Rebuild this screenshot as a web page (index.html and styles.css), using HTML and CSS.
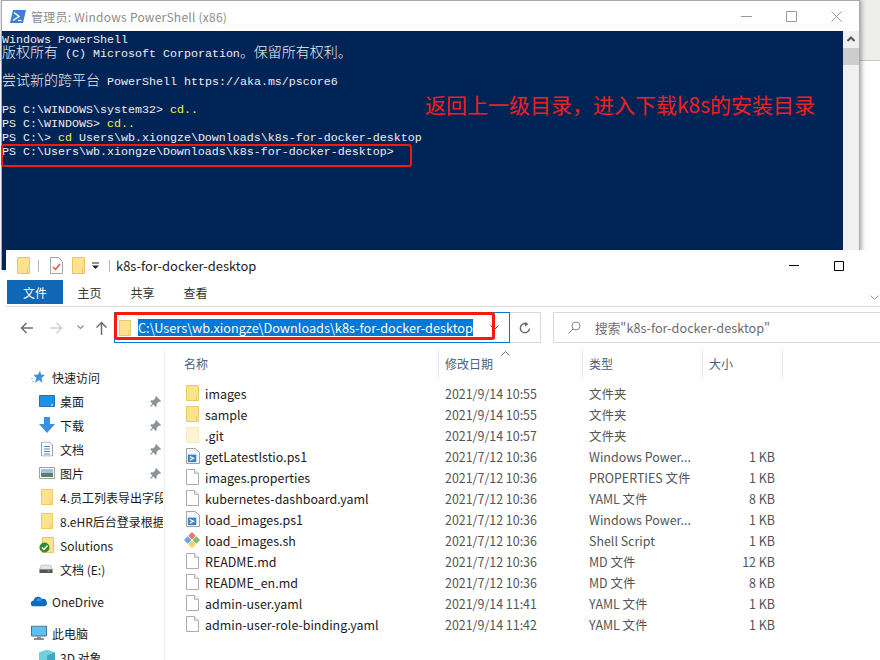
FILE: index.html
```html
<!DOCTYPE html>
<html lang="zh">
<head>
<meta charset="utf-8">
<title>PowerShell and Explorer</title>
<link rel="stylesheet" href="styles.css">
</head>
<body>
<svg class="defs" width="0" height="0">
  <symbol id="folder" viewBox="0 0 13 17" preserveAspectRatio="none"><path d="M.5.500h12v16H.5z" fill="#fde38f" stroke="#eac563"/><path d="M10.500 16.500v-5h2" fill="#fff3c6" stroke="#eac563"/></symbol>
  <symbol id="folderpale" viewBox="0 0 13 17" preserveAspectRatio="none"><path d="M.5.500h12v16H.5z" fill="#fef4d2" stroke="#f6e8b8"/></symbol>
  <symbol id="file" viewBox="0 0 13 17" preserveAspectRatio="none"><path d="M.5.500h8l4 4v12H.5z" fill="#fff" stroke="#a9a9a9"/><path d="M8.500.500v4h4" fill="#f3f3f3" stroke="#a9a9a9"/></symbol>
  <symbol id="psfile" viewBox="0 0 15 17" preserveAspectRatio="none"><path d="M.5.500h9l5 4v12H.5z" fill="#f7f7f7" stroke="#9a9a9a"/><path d="M2 7h9v8H2z" fill="#3b83c8"/><path d="M4 9l4 2-4 2" fill="none" stroke="#fff" stroke-width="1.300"/></symbol>
  <symbol id="shfile" viewBox="0 0 17 17"><path d="M8.500 0l4 4-4 4-4-4z" fill="#e8746c"/><path d="M13 4.500l4 4-4 4-4-4z" fill="#7cc06a"/><path d="M8.500 9l4 4-4 4-4-4z" fill="#f3d35b"/><path d="M4 4.500l4 4-4 4-4-4z" fill="#6aa7e6"/></symbol>
  <symbol id="pin" viewBox="0 0 11 11"><path d="M6 0l5 5-1 1-1-.4-2.400 2.400.2 2-1 1L3.300 8.500.8 11 0 10.200l2.500-2.500L.2 5.200l1-1 2 .2L5.600 2 5.200 1z" fill="#8a9299"/></symbol>
</svg>

<main class="desktop">
  <section class="ps-window">
    <header class="ps-title">
      <svg class="ps-icon" width="16" height="13" viewBox="0 0 16 13"><path d="M3 0h13l-3 13H0z" fill="#3f7fd0"/><path d="M4 2.500l5 4-6 4" fill="none" stroke="#fff" stroke-width="1.500"/><path d="M8 10.500h3.500" stroke="#fff" stroke-width="1.300"/></svg>
      <span class="ps-name">管理员: Windows PowerShell (x86)</span>
      <div class="ps-controls">
        <svg width="11" height="11" viewBox="0 0 11 11"><path d="M0 5.500h11" stroke="#999"/></svg>
        <svg width="11" height="11" viewBox="0 0 11 11"><path d="M.5.500h10v10H.5z" fill="none" stroke="#999"/></svg>
        <svg width="11" height="11" viewBox="0 0 11 11"><path d="M.5.500l10 10M10.500.500l-10 10" stroke="#999"/></svg>
      </div>
    </header>
    <div class="ps-body">
      <div class="console">
        <div class="line">Windows PowerShell</div>
        <div class="line"><span class="wide">版权所有</span> (C) Microsoft Corporation<span class="wide">。保留所有权利。</span></div>
        <div class="line"></div>
        <div class="line"><span class="wide">尝试新的跨平台</span> PowerShell https://aka.ms/pscore6</div>
        <div class="line"></div>
        <div class="line">PS C:\WINDOWS\system32&gt; <span class="cmd">cd..</span></div>
        <div class="line">PS C:\WINDOWS&gt; <span class="cmd">cd..</span></div>
        <div class="line">PS C:\&gt; <span class="cmd">cd</span> Users\wb.xiongze\Downloads\k8s-for-docker-desktop</div>
        <div class="line">PS C:\Users\wb.xiongze\Downloads\k8s-for-docker-desktop&gt;</div>
      </div>
      <div class="scrollbar">
        <svg width="16" height="16" viewBox="0 0 16 16"><path d="M4.500 10L8 6.500 11.500 10" fill="none" stroke="#555" stroke-width="2"/></svg>
        <div class="thumb"></div>
      </div>
    </div>
  </section>

  <p class="note">返回上一级目录，进入下载k8s的安装目录</p>
  <div class="mark mark-ps"></div>

  <section class="ex-window">
    <header class="ex-title">
      <svg class="qa-first" width="13" height="17"><use href="#folder"/></svg>
      <span class="vsep"></span>
      <svg class="qa-doc" width="13" height="17" viewBox="0 0 13 17"><path d="M.5.500h8l4 4v12H.5z" fill="#fff" stroke="#a5a5a5"/><path d="M3 10l2.500 2.500L10 7" fill="none" stroke="#e2553a" stroke-width="1.500"/></svg>
      <svg class="qa-folder" width="13" height="17"><use href="#folder"/></svg>
      <svg class="qa-drop" width="8" height="8" viewBox="0 0 8 8"><path d="M0 1h7" stroke="#222"/><path d="M0 3.500h7L3.500 7z" fill="#222"/></svg>
      <span class="vsep vsep-b"></span>
      <span class="ex-name">k8s-for-docker-desktop</span>
      <div class="ex-controls">
        <svg width="10" height="11" viewBox="0 0 10 11"><path d="M0 5.500h10" stroke="#000"/></svg>
        <svg width="10" height="10" viewBox="0 0 10 10"><path d="M.5.500h9v9H.5z" fill="none" stroke="#000"/></svg>
      </div>
    </header>
    <nav class="tabs">
      <span class="tab tab-file">文件</span>
      <span class="tab">主页</span>
      <span class="tab">共享</span>
      <span class="tab">查看</span>
      <svg class="ribbon-toggle" width="9" height="6" viewBox="0 0 9 6"><path d="M.5.500l4 4 4-4" fill="none" stroke="#999"/></svg>
    </nav>
    <div class="addr-row">
      <div class="nav-btns">
        <svg width="13" height="12" viewBox="0 0 13 12"><path d="M13 6H2M6.500 1L1.500 6l5 5" fill="none" stroke="#6d6d6d" stroke-width="1.500"/></svg>
        <svg class="nav-fwd" width="13" height="12" viewBox="0 0 13 12"><path d="M0 6h11M6.500 1l5 5-5 5" fill="none" stroke="#cfcfcf" stroke-width="1.500"/></svg>
        <svg class="nav-caret" width="7" height="5" viewBox="0 0 7 5"><path d="M.5.500l3 3 3-3" fill="none" stroke="#8b8b8b" stroke-width="1.200"/></svg>
        <svg class="nav-up" width="11" height="14" viewBox="0 0 11 14"><path d="M5.500 14V2M.5 6.500l5-5 5 5" fill="none" stroke="#6d6d6d" stroke-width="1.500"/></svg>
      </div>
      <div class="addr-box">
        <svg class="addr-folder" width="12" height="16"><use href="#folder"/></svg>
        <span class="addr-sel">C:\Users\wb.xiongze\Downloads\k8s-for-docker-desktop</span>
        <svg class="addr-drop" width="9" height="6" viewBox="0 0 9 6"><path d="M.5.500l4 4 4-4" fill="none" stroke="#555"/></svg>
      </div>
      <div class="refresh">
        <svg width="12" height="12" viewBox="0 0 12 12"><path d="M10.500 6.500A4.600 4.600 0 1 1 7.500 1.800" fill="none" stroke="#666" stroke-width="1.400"/><path d="M6 0l3.500 2L6 4.500z" fill="#666"/></svg>
      </div>
      <div class="search">
        <svg width="13" height="13" viewBox="0 0 13 13"><circle cx="8" cy="5" r="4" fill="none" stroke="#888"/><path d="M5 8l-4.500 4.500" stroke="#888"/></svg>
        <span>搜索"k8s-for-docker-desktop"</span>
      </div>
    </div>

    <div class="ex-main">
      <aside class="side">
        <div class="s-row top"><svg class="s-ic" width="14" height="13" viewBox="0 0 14 13"><path d="M9 0l1 4 4 .500-3.500 3 1 5-3.500-3-4 3 1.500-5-3-3 4.500-.500z" fill="#3f8fdb"/><path d="M0 8h2M1 11h2" stroke="#9cc8ee"/></svg><span>快速访问</span></div>
        <div class="s-row"><svg class="s-ic" width="16" height="12" viewBox="0 0 16 12"><path d="M.5.500h15v11H.5z" fill="#1e90e6" stroke="#1873b8"/><path d="M12 10h2" stroke="#fff"/></svg><span>桌面</span><svg class="pin" width="11" height="11"><use href="#pin"/></svg></div>
        <div class="s-row"><svg class="s-ic" width="16" height="16" viewBox="0 0 16 16"><path d="M5 0h6v7h5l-8 9-8-9h5z" fill="#3b8fe0"/></svg><span>下载</span><svg class="pin" width="11" height="11"><use href="#pin"/></svg></div>
        <div class="s-row"><svg class="s-ic" width="16" height="15" viewBox="0 0 16 15"><path d="M2.500.500h8l3 3v11h-11z" fill="#fff" stroke="#a0a0a0"/><path d="M5 5h6M5 7.500h6M5 10h6M5 12.500h6" stroke="#4a88c7"/></svg><span>文档</span><svg class="pin" width="11" height="11"><use href="#pin"/></svg></div>
        <div class="s-row"><svg class="s-ic" width="16" height="12" viewBox="0 0 16 12"><path d="M.5.500h15v11H.5z" fill="#fff" stroke="#a0a0a0"/><path d="M2 2h12v4H2z" fill="#9cc3de"/><path d="M2 6h12v4H2z" fill="#5b8064"/></svg><span>图片</span><svg class="pin" width="11" height="11"><use href="#pin"/></svg></div>
        <div class="s-row"><svg class="s-ic s-folder" width="12" height="16"><use href="#folder"/></svg><span class="clip">4.员工列表导出字段</span></div>
        <div class="s-row"><svg class="s-ic s-folder" width="12" height="16"><use href="#folder"/></svg><span class="clip">8.eHR后台登录根据</span></div>
        <div class="s-row"><svg class="s-ic" width="16" height="16" viewBox="0 0 16 16"><path d="M3.500.500h11v15h-11z" fill="#fde38f" stroke="#eac563"/><circle cx="5.500" cy="10.500" r="5" fill="#2f8a2f"/><path d="M3 10.500l2 2 3.500-4" fill="none" stroke="#fff" stroke-width="1.400"/></svg><span>Solutions</span></div>
        <div class="s-row"><svg class="s-ic" width="14" height="9" viewBox="0 0 16 10"><path d="M3 .500h10l2.500 5H.5z" fill="#e6e6e6" stroke="#b5b5b5"/><path d="M.5 5.500h15v4H.5z" fill="#555"/><path d="M10 7.500h2" stroke="#6fe06f"/></svg><span>文档 (E:)</span></div>
        <div class="s-row top gap"><svg class="s-ic" width="16" height="11" viewBox="0 0 16 11"><path d="M3 11a3 3 0 0 1-.3-6A4.500 4.500 0 0 1 11 3.500 3.800 3.800 0 0 1 13 11z" fill="#0f6cbd"/><path d="M5 5a4.500 4.500 0 0 1 6-1.500L9 6z" fill="#2f9be8"/></svg><span>OneDrive</span></div>
        <div class="s-row top gap"><svg class="s-ic" width="16" height="15" viewBox="0 0 16 15"><path d="M.5.500h15v10H.5z" fill="#5cc0f0" stroke="#5b6b78"/><path d="M6 11h4v2H6z" fill="#8a98a5"/><path d="M3 13.500h10" stroke="#5b6b78" stroke-width="1.500"/></svg><span>此电脑</span></div>
        <div class="s-row"><svg class="s-ic" width="16" height="15" viewBox="0 0 16 15"><path d="M8 0l8 3v9l-8 3-8-3V3z" fill="#6fd0e0"/><path d="M8 6l8-3v9l-8 3z" fill="#3fa9c4"/></svg><span>3D 对象</span></div>
      </aside>
      <div class="files">
        <div class="f-head">
          <span class="h-name">名称</span>
          <span class="h-date">修改日期</span>
          <span class="h-type">类型</span>
          <span class="h-size">大小</span>
          <svg class="sort" width="9" height="5" viewBox="0 0 9 5"><path d="M.5 4.500l4-4 4 4" fill="none" stroke="#777"/></svg>
        </div>
        <div class="f-row"><svg class="f-ic" width="13" height="16"><use href="#folder"/></svg><span class="c-name">images</span><span class="c-date">2021/9/14 10:55</span><span class="c-type">文件夹</span><span class="c-size"></span></div>
        <div class="f-row"><svg class="f-ic" width="13" height="16"><use href="#folder"/></svg><span class="c-name">sample</span><span class="c-date">2021/9/14 10:55</span><span class="c-type">文件夹</span><span class="c-size"></span></div>
        <div class="f-row"><svg class="f-ic" width="13" height="16"><use href="#folderpale"/></svg><span class="c-name">.git</span><span class="c-date">2021/9/14 10:57</span><span class="c-type">文件夹</span><span class="c-size"></span></div>
        <div class="f-row"><svg class="f-ic" width="14" height="16"><use href="#psfile"/></svg><span class="c-name">getLatestIstio.ps1</span><span class="c-date">2021/7/12 10:36</span><span class="c-type">Windows Power...</span><span class="c-size">1 KB</span></div>
        <div class="f-row"><svg class="f-ic" width="13" height="16"><use href="#file"/></svg><span class="c-name">images.properties</span><span class="c-date">2021/7/12 10:36</span><span class="c-type">PROPERTIES 文件</span><span class="c-size">1 KB</span></div>
        <div class="f-row"><svg class="f-ic" width="13" height="16"><use href="#file"/></svg><span class="c-name">kubernetes-dashboard.yaml</span><span class="c-date">2021/7/12 10:36</span><span class="c-type">YAML 文件</span><span class="c-size">8 KB</span></div>
        <div class="f-row"><svg class="f-ic" width="14" height="16"><use href="#psfile"/></svg><span class="c-name">load_images.ps1</span><span class="c-date">2021/7/12 10:36</span><span class="c-type">Windows Power...</span><span class="c-size">1 KB</span></div>
        <div class="f-row"><svg class="f-ic f-sh" width="16" height="16"><use href="#shfile"/></svg><span class="c-name">load_images.sh</span><span class="c-date">2021/7/12 10:36</span><span class="c-type">Shell Script</span><span class="c-size">1 KB</span></div>
        <div class="f-row"><svg class="f-ic" width="13" height="16"><use href="#file"/></svg><span class="c-name">README.md</span><span class="c-date">2021/7/12 10:36</span><span class="c-type">MD 文件</span><span class="c-size">12 KB</span></div>
        <div class="f-row"><svg class="f-ic" width="13" height="16"><use href="#file"/></svg><span class="c-name">README_en.md</span><span class="c-date">2021/7/12 10:36</span><span class="c-type">MD 文件</span><span class="c-size">8 KB</span></div>
        <div class="f-row"><svg class="f-ic" width="13" height="16"><use href="#file"/></svg><span class="c-name">admin-user.yaml</span><span class="c-date">2021/9/14 11:41</span><span class="c-type">YAML 文件</span><span class="c-size">1 KB</span></div>
        <div class="f-row"><svg class="f-ic" width="13" height="16"><use href="#file"/></svg><span class="c-name">admin-user-role-binding.yaml</span><span class="c-date">2021/9/14 11:42</span><span class="c-type">YAML 文件</span><span class="c-size">1 KB</span></div>
      </div>
    </div>
  </section>
  <div class="mark mark-ex"></div>
</main>
</body>
</html>
```

FILE: styles.css
```css
* { box-sizing: border-box; }
html, body { margin: 0; padding: 0; }
body { width: 880px; height: 660px; overflow: hidden; background: #fff; }
.defs { position: absolute; }
svg { display: block; flex: none; }

.desktop {
  position: relative;
  width: 880px;
  height: 660px;
  overflow: hidden;
  background: linear-gradient(#eeeeec 0 60px, #c8c8c8 60px 61px, #fff 61px);
  font-family: "Noto Sans CJK SC", "Noto Sans", sans-serif;
}

/* PowerShell window */
.ps-window {
  position: absolute;
  left: 1px;
  top: 0;
  width: 859px;
  height: 270px;
  background: #fff;
  border: 1px solid #a9a9a9;
  border-bottom: 0;
  box-shadow: 2px 0 4px rgba(0, 0, 0, .3);
  display: flex;
  flex-direction: column;
}
.ps-title {
  height: 30px;
  display: flex;
  align-items: center;
  padding-left: 8px;
  flex: none;
}
.ps-icon { margin-right: 5px; }
.ps-name { font-size: 12px; color: #8c8c8c; letter-spacing: .02em; }
.ps-controls {
  margin-left: auto;
  display: flex;
  align-items: center;
  gap: 34px;
  padding-right: 17px;
}
.ps-body { flex: 1; display: flex; min-height: 0; }
.console {
  flex: 1;
  background: #012456;
  padding-top: 2px;
  color: #eeedf0;
  font-family: "Liberation Mono", "Noto Sans CJK SC", monospace;
  font-size: 11.67px;
  line-height: 14px;
}
.line { height: 14px; white-space: pre; }
.wide { font-family: "Noto Sans CJK SC", sans-serif; font-size: 14px; font-weight: 300; line-height: 0; }
.cmd { color: #f5f543; }
.scrollbar { width: 16px; background: #f0f0f0; flex: none; }
.thumb { height: 17px; background: #cdcdcd; margin-top: 1px; }

.note {
  position: absolute;
  left: 425px;
  top: 90px;
  margin: 0;
  color: #f02020;
  font-size: 21px;
  line-height: 28px;
  white-space: nowrap;
}
.mark {
  position: absolute;
  border: 3px solid #f5190f;
  border-radius: 3px;
  z-index: 5;
}
.mark-ps { left: 1px; top: 144px; width: 411px; height: 23px; border-width: 2px; }
.mark-ex { left: 114px; top: 312px; width: 381px; height: 28px; }

/* Explorer window */
.ex-window {
  position: absolute;
  left: 6px;
  top: 250px;
  width: 880px;
  height: 420px;
  background: #fff;
  display: flex;
  flex-direction: column;
  font-size: 12px;
  color: #1b1b1b;
}
.ex-title {
  height: 30px;
  display: flex;
  align-items: center;
  padding-left: 11px;
  padding-top: 1px;
  flex: none;
}
.vsep { width: 1px; height: 12px; background: #b5b5b5; margin: 0 11px 0 8px; }
.vsep-b { margin: 0 6px 0 9px; }
.qa-doc { margin-right: 9px; }
.qa-folder { margin-right: 7px; }
.ex-name { font-size: 12.95px; color: #222; }
.ex-controls {
  position: absolute;
  left: 783px;
  top: 10px;
  display: flex;
  align-items: center;
  gap: 35px;
}
.tabs {
  height: 27px;
  display: flex;
  align-items: flex-start;
  flex: none;
  border-bottom: 1px solid #dadbdc;
  position: relative;
  padding-left: 1px;
}
.tab {
  height: 24px;
  width: 53px;
  display: flex;
  align-items: center;
  justify-content: center;
  font-size: 12px;
  color: #333;
}
.tab-file { width: 56px; background: #0f67b6; color: #fff; }
.ribbon-toggle { position: absolute; left: 864px; top: 15px; }
.addr-row {
  height: 43px;
  padding-top: 5px;
  display: flex;
  align-items: flex-start;
  flex: none;
}
.nav-btns {
  width: 108px;
  height: 31px;
  display: flex;
  align-items: center;
  padding-left: 14px;
}
.nav-fwd { margin-left: 17px; }
.nav-caret { margin-left: 14px; }
.nav-up { margin-left: 12px; }
.addr-box {
  width: 396px;
  height: 31px;
  border: 1px solid #0078d7;
  display: flex;
  align-items: center;
  padding-left: 4px;
  position: relative;
}
.addr-folder { margin-right: 7px; }
.addr-sel {
  background: #0078d7;
  color: #fff;
  font-size: 12.73px;
  line-height: 17px;
  white-space: nowrap;
}
.addr-drop { position: absolute; right: 10px; top: 12px; }
.refresh {
  width: 31px;
  height: 31px;
  border: 1px solid #d9d9d9;
  border-left: 0;
  display: flex;
  align-items: center;
  justify-content: center;
  margin-right: 12px;
}
.search {
  flex: 1;
  height: 31px;
  border: 1px solid #d9d9d9;
  border-right: 0;
  display: flex;
  align-items: center;
  gap: 14px;
  padding-left: 14px;
  color: #6d6d6d;
  font-size: 12.7px;
  white-space: nowrap;
}

.ex-main { flex: 1; display: flex; min-height: 0; }
.side {
  width: 159px;
  padding-top: 15px;
  border-right: 1px solid #f1f1f1;
  flex: none;
}
.s-row {
  height: 24px;
  display: flex;
  align-items: center;
  padding-left: 33px;
  position: relative;
  white-space: nowrap;
  color: #1b1b1b;
}
.s-row .s-ic { position: absolute; left: 33px; top: 50%; transform: translateY(-50%); }
.s-row .s-folder { left: 35px; }
.s-row span { margin-left: 21px; }
.s-row.top { padding-left: 25px; }
.s-row.top .s-ic { left: 25px; }
.s-row.gap { margin-top: 8px; }
.clip { width: 103px; overflow: hidden; }
.pin { position: absolute; left: 144px; top: 7px; }

.files { flex: 1; min-width: 0; }
.f-head {
  height: 28px;
  display: flex;
  align-items: center;
  margin-bottom: 5px;
  position: relative;
  color: #4c607a;
  font-size: 12px;
}
.f-head span { height: 28px; line-height: 28px; border-right: 1px solid #e5e5e5; flex: none; }
.h-name { width: 274px; padding-left: 19px; }
.h-date { width: 144px; padding-left: 6px; }
.h-type { width: 120px; padding-left: 6px; }
.h-size { width: 80px; padding-left: 6px; }
.sort { position: absolute; left: 336px; top: 1px; }
.f-row {
  height: 21px;
  display: flex;
  align-items: center;
  position: relative;
  font-size: 12.45px;
  white-space: nowrap;
}
.f-ic { position: absolute; left: 21px; top: 2px; }
.f-sh { left: 19px; }
.c-name { width: 240px; margin-left: 40px; color: #1b1b1b; }
.c-date { width: 144px; color: #555; }
.c-type { width: 130px; color: #555; }
.c-size { width: 56px; text-align: right; color: #555; }
```
